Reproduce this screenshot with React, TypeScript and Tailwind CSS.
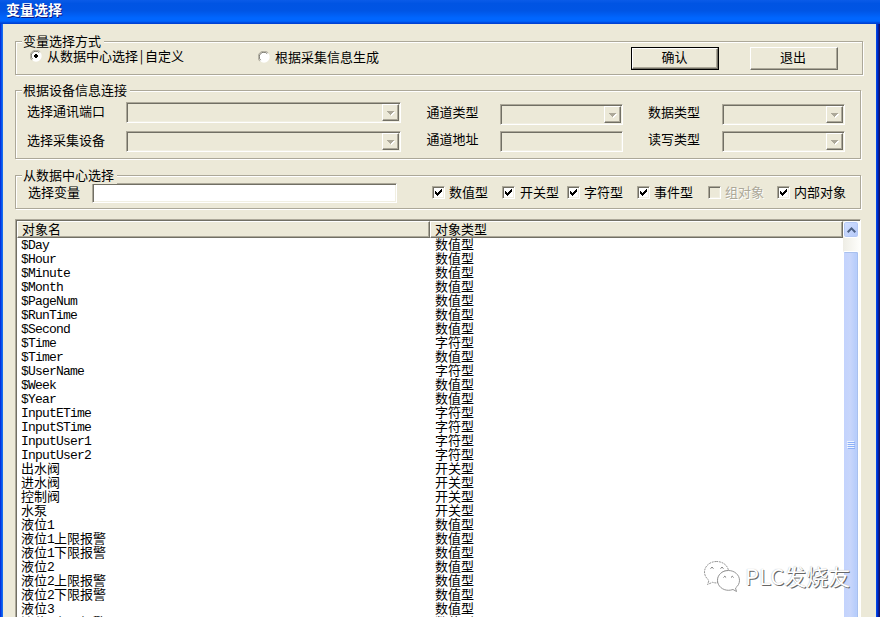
import type { ReactNode } from "react";
import clsx from "clsx";

const RAISED =
  "bg-[#ece9d8] border border-t-white border-l-white border-r-[#716f64] border-b-[#716f64] shadow-[inset_-1px_-1px_0_#aca899]";
const SUNKEN =
  "border border-t-[#aca899] border-l-[#aca899] border-r-white border-b-white shadow-[inset_1px_1px_0_#716f64,inset_-1px_-1px_0_#f1efe2]";

const filters = [
  { label: "数值型", checked: true, width: "w-[70px] gap-1" },
  { label: "开关型", checked: true, width: "w-[65px] gap-[5px]" },
  { label: "字符型", checked: true, width: "w-[70px] gap-1" },
  { label: "事件型", checked: true, width: "w-[71px] gap-1" },
  { label: "组对象", checked: false, disabled: true, width: "w-[69px] gap-1" },
  { label: "内部对象", checked: true, width: "w-[70px] gap-1" },
];

const rows = [
  ["$Day", "数值型"],
  ["$Hour", "数值型"],
  ["$Minute", "数值型"],
  ["$Month", "数值型"],
  ["$PageNum", "数值型"],
  ["$RunTime", "数值型"],
  ["$Second", "数值型"],
  ["$Time", "字符型"],
  ["$Timer", "数值型"],
  ["$UserName", "字符型"],
  ["$Week", "数值型"],
  ["$Year", "数值型"],
  ["InputETime", "字符型"],
  ["InputSTime", "字符型"],
  ["InputUser1", "字符型"],
  ["InputUser2", "字符型"],
  ["出水阀", "开关型"],
  ["进水阀", "开关型"],
  ["控制阀", "开关型"],
  ["水泵", "开关型"],
  ["液位1", "数值型"],
  ["液位1上限报警", "数值型"],
  ["液位1下限报警", "数值型"],
  ["液位2", "数值型"],
  ["液位2上限报警", "数值型"],
  ["液位2下限报警", "数值型"],
  ["液位3", "数值型"],
  ["液位3上限报警", "数值型"],
];

// latin runs get a 7px cell, chinese ones a 13px cell
function Mixed({ text }: { text: string }) {
  return (
    <>
      {text.split(/([\x20-\x7e]+)/).map((part, i) =>
        i % 2 ? (
          <span key={i} className="font-['Liberation_Mono',monospace] text-[13px] tracking-[-0.8px]">
            {part}
          </span>
        ) : (
          part
        ),
      )}
    </>
  );
}

function Group({ title, className, children }: { title: string; className: string; children: ReactNode }) {
  return (
    <div
      className={clsx(
        "relative flex shrink-0 items-start border border-[#aca899] shadow-[1px_1px_0_#fff,inset_1px_1px_0_#fff]",
        className,
      )}
    >
      <span className="absolute -top-[8px] left-[6px] z-10 h-4 bg-[#ece9d8] pr-[3px] pl-px leading-[13px]">
        {title}
      </span>
      {children}
    </div>
  );
}

function Radio({ checked }: { checked?: boolean }) {
  return (
    <svg width="12" height="12" viewBox="0 0 12 12" className="shrink-0">
      <circle cx="6" cy="6" r="5.7" fill="#fff" />
      <path d="M1.8 10.2A5.5 5.5 0 0 1 10.2 1.8" fill="none" stroke="#aca899" />
      <path d="M2.6 9.2A4.5 4.5 0 0 1 9.2 2.6" fill="none" stroke="#716f64" />
      {checked && <path d="M5 4h2v1h1v2h-1v1h-2v-1h-1v-2h1z" fill="#000" />}
    </svg>
  );
}

function Check({ checked, disabled }: { checked: boolean; disabled?: boolean }) {
  return (
    <span className={clsx("flex size-[13px] shrink-0 items-center justify-center", SUNKEN, disabled ? "bg-[#ece9d8]" : "bg-white")}>
      {checked && (
        <svg width="7" height="7" viewBox="0 0 7 7" shapeRendering="crispEdges">
          <path d="M0 2h1v1h1v1h1v-1h1v-1h1v-1h1v-1h1v3h-1v1h-1v1h-1v1h-1v1h-1v-1h-1v-1h-1z" />
        </svg>
      )}
    </span>
  );
}

function Field({ width, combo = true }: { width: string; combo?: boolean }) {
  return (
    <div className={clsx("flex h-[21px] shrink-0 justify-end p-px", SUNKEN, width)}>
      {combo && (
        <div className={clsx("flex size-[17px] items-center justify-center pt-[2px]", RAISED)}>
          <svg width="8" height="5" viewBox="0 0 8 5" shapeRendering="crispEdges">
            <path d="M1 1h7v1h-1v1h-1v1h-1v1h-1v-1h-1v-1h-1v-1h-1z" fill="#fff" />
            <path d="M0 0h7v1h-1v1h-1v1h-1v1h-1v-1h-1v-1h-1v-1h-1z" fill="#aca899" />
          </svg>
        </div>
      )}
    </div>
  );
}

function Watermark() {
  return (
    <div className="absolute top-[560px] left-[703px] flex items-start gap-[6px]">
      <svg width="37" height="34" viewBox="0 0 37 34" fill="#fff" stroke="#8a8a8a" strokeWidth="0.9">
        <path d="M13.500 1.500C6.500 1.500 1.500 6.500 1.500 12C1.500 15.500 3.500 18.500 6 20.500L4.500 24.500L9.500 22.300C11 22.800 12.500 23 14.500 23C14 15.500 19 10.500 25.500 10.500C24.500 5 19.500 1.500 13.500 1.500Z" strokeDasharray="2 .8" />
        <path d="M25.500 10.500C19 10.500 14.500 15 14.500 20.300C14.500 26 19.500 30.300 25.500 30.300C27 30.300 28.500 30 30 29.500L33.500 31.500L32.500 28C35 26 36.500 23.500 36.500 20.300C36.500 15 31.500 10.500 25.500 10.500Z" />
        <path d="M7.500 8.500q1.500-2.500 3 0M17.500 8.500q1.500-2.500 3 0M20.500 17.500q1.300-2.500 2.600 0M28 17.500q1.300-2.500 2.600 0" fill="none" stroke="#666" />
      </svg>
      <span className="-ml-px text-[22px] leading-[31px] whitespace-nowrap text-white [text-shadow:1px_1px_0_#666,0_0_1px_#aaa]">
        PLC发烧友
      </span>
    </div>
  );
}

export default function App() {
  return (
    <div className="relative flex h-[617px] w-[880px] flex-col overflow-hidden bg-[#ece9d8] font-['Noto_Sans_CJK_SC',sans-serif] text-[13px] leading-[13px] whitespace-nowrap text-black">
      <div className="h-6 shrink-0 bg-[linear-gradient(180deg,#0a5be8_0,#0054e3_15%,#0055e5_45%,#0066ff_75%,#0066ff_88%,#0044d8_96%,#0040d0_100%)] pt-[2px] pl-[6px] text-[14px] leading-[14px] font-bold text-white [text-shadow:1px_1px_0_#0a1883]">
        变量选择
      </div>

      <div className="flex min-h-0 flex-1">
        <div className="w-[3px] shrink-0 bg-[linear-gradient(90deg,#0831d9_0_1px,#0453ee_1px_2px,#166aee_2px)]" />

        <div className="flex flex-1 flex-col items-start pl-3">
          <Group title="变量选择方式" className="mt-[17px] h-[34px] w-[848px]">
            <div className="mt-[7px] ml-[14px] flex w-[228px] gap-[5px]">
              <div className="pt-px">
                <Radio checked />
              </div>
              <span>
                从数据中心选择
                <span className="inline-block w-[7px] text-center">|</span>
                自定义
              </span>
            </div>
            <div className="mt-2 flex w-[373px] gap-[5px]">
              <div className="pt-px">
                <Radio />
              </div>
              <span>根据采集信息生成</span>
            </div>
            <div className="mt-[5px] flex gap-[31px]">
              <button className="h-[23px] w-[88px] border border-black">
                <span className={clsx("flex h-full items-center justify-center pr-px pb-[5px]", RAISED)}>确认</span>
              </button>
              <button className={clsx("flex h-[23px] w-[88px] items-center justify-center pr-[2px] pb-[5px]", RAISED)}>
                退出
              </button>
            </div>
          </Group>

          <Group title="根据设备信息连接" className="mt-[15px] h-[69px] w-[846px]">
            <div className="mt-[11px] ml-[11px] flex flex-col gap-2">
              <div className="flex">
                <span className="w-[99px] pt-[2px]">选择通讯端口</span>
                <Field width="w-[275px]" />
              </div>
              <div className="flex">
                <span className="w-[99px] pt-[2px]">选择采集设备</span>
                <Field width="w-[275px]" />
              </div>
            </div>
            <div className="mt-[13px] ml-[25px] flex flex-col gap-[6px]">
              <div className="flex">
                <span className="w-[74px] pt-px pl-[0.5px]">通道类型</span>
                <Field width="w-[123px]" />
              </div>
              <div className="flex">
                <span className="w-[74px] pt-px pl-[0.5px]">通道地址</span>
                <Field width="w-[123px]" combo={false} />
              </div>
            </div>
            <div className="mt-[13px] ml-[25px] flex flex-col gap-[6px]">
              <div className="flex">
                <span className="w-[74px] pt-px">数据类型</span>
                <Field width="w-[123px]" />
              </div>
              <div className="flex">
                <span className="w-[74px] pt-px">读写类型</span>
                <Field width="w-[123px]" />
              </div>
            </div>
          </Group>

          <Group title="从数据中心选择" className="mt-4 h-[34px] w-[846px]">
            <span className="mt-[9px] ml-[12px] w-[64px]">选择变量</span>
            <div className={clsx("mt-[7px] h-5 w-[305px] bg-white", SUNKEN)} />
            <div className="mt-[10px] ml-[35px] flex">
              {filters.map((f) => (
                <div key={f.label} className={clsx("flex", f.width)}>
                  <Check checked={f.checked} disabled={f.disabled} />
                  <span className={clsx("-mt-px", f.disabled && "text-[#aca899] [text-shadow:1px_1px_0_#fff]")}>
                    {f.label}
                  </span>
                </div>
              ))}
            </div>
          </Group>

          <div className="mt-[10px] flex min-h-0 w-[846px] flex-1 border-t border-l border-[#aca899] border-r border-r-white">
            <div className="flex min-w-0 flex-1 flex-col overflow-hidden border-t border-l border-[#716f64] bg-white">
              <div className="flex h-[17px] shrink-0">
                <div className={clsx("w-[413px] pl-1", RAISED)}>对象名</div>
                <div className={clsx("flex-1 pl-1", RAISED)}>对象类型</div>
              </div>
              <div className="-mt-px flex flex-col">
                {rows.map(([name, type]) => (
                  <div key={name} className="flex h-[14px] shrink-0 leading-[14px]">
                    <span className="w-[414px] pl-1">
                      <Mixed text={name} />
                    </span>
                    <span className="pl-1">{type}</span>
                  </div>
                ))}
              </div>
            </div>

            <div className="flex w-[17px] shrink-0 flex-col border-t border-[#716f64] bg-[linear-gradient(90deg,#eeede5,#fefefb)] pr-px">
              <div className="flex h-[17px] shrink-0 items-center justify-center rounded-[3px] border border-white bg-[linear-gradient(135deg,#d3e0ff,#b5c9f8)] shadow-[inset_0_0_0_1px_#b5c9f5]">
                <svg width="9" height="6" viewBox="0 0 9 6" fill="none" stroke="#4d6185" strokeWidth="2">
                  <path d="M.7 5.200L4.500 1.400L8.300 5.200" />
                </svg>
              </div>
              <div className="mt-[13px] flex-1 rounded-t-[2px] border-x border-t border-white bg-[linear-gradient(90deg,#c3d3fd_0,#c8d6fb_45%,#b7cdfb_85%,#b9d0ff_100%)] pt-[190px] shadow-[inset_-1px_1px_0_#a8c0ee]">
                <div className="ml-1 flex flex-col gap-px">
                  {[0, 1, 2, 3].map((i) => (
                    <div key={i} className="h-px w-[7px] bg-[#8cb0f8] shadow-[-1px_-1px_0_#eef4fe]" />
                  ))}
                </div>
              </div>
            </div>
          </div>
        </div>

        <div className="w-1 shrink-0 bg-[linear-gradient(90deg,#0045e6_0_1px,#0030cc_1px_2px,#001ea0_2px_3px,#1a1360_3px)]" />
      </div>

      <Watermark />
    </div>
  );
}
